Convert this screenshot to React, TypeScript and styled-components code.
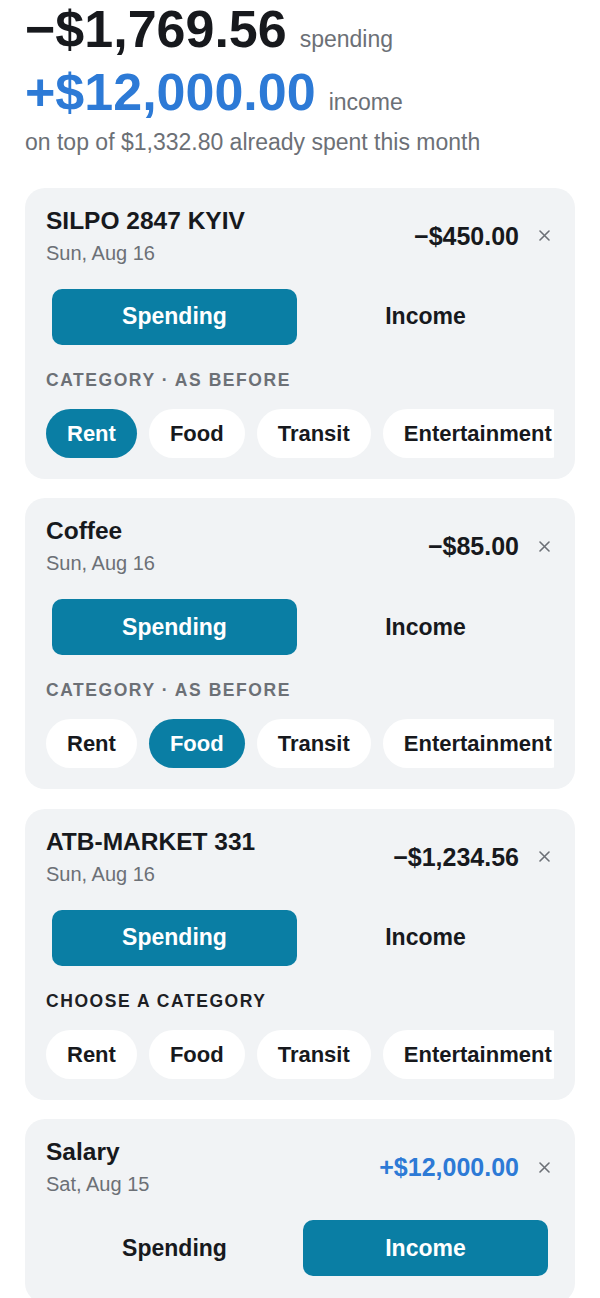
import React from "react";
import styled, { createGlobalStyle } from "styled-components";

const GlobalStyle = createGlobalStyle`
  html, body {
    margin: 0;
    padding: 0;
    background: #ffffff;
  }
  body {
    font-family: "Liberation Sans", Arial, sans-serif;
    color: #17191d;
    -webkit-font-smoothing: antialiased;
  }
  * { box-sizing: border-box; }
`;

const Page = styled.div`
  padding: 0 25px 40px;
  display: flex;
  flex-direction: column;
`;

const Summary = styled.header`
  margin-top: -2px;
  display: flex;
  flex-direction: column;
`;

const TotalLine = styled.div`
  display: flex;
  align-items: baseline;
  gap: 13px;
  height: 63px;
`;

const TotalValue = styled.span<{ $tone: "spend" | "income" }>`
  font-size: 52px;
  font-weight: 700;
  line-height: 63px;
  color: ${(p) => (p.$tone === "income" ? "#2d7ad6" : "#17191d")};
`;

const TotalLabel = styled.span`
  font-size: 23px;
  line-height: 1;
  color: #6c7076;
`;

const SummaryNote = styled.p`
  margin: 5px 0 0;
  font-size: 23px;
  line-height: 27.6px;
  color: #6c7076;
`;

const List = styled.div`
  margin-top: 31px;
  display: flex;
  flex-direction: column;
  gap: 19.5px;
`;

const Card = styled.section`
  background: #f1f3f5;
  border-radius: 20px;
  padding: 18px 21px 21px;
  display: flex;
  flex-direction: column;
`;

const CardHead = styled.div`
  display: flex;
  align-items: center;
  justify-content: space-between;
`;

const Who = styled.div`
  display: flex;
  flex-direction: column;
  gap: 4px;
`;

const Title = styled.div`
  font-size: 24.5px;
  font-weight: 700;
  line-height: 30px;
  color: #17191d;
`;

const DateText = styled.div`
  font-size: 20px;
  line-height: 26px;
  color: #6c7076;
`;

const AmountWrap = styled.div`
  display: flex;
  align-items: center;
  gap: 15px;
`;

const Amount = styled.div<{ $income?: boolean }>`
  font-size: 25px;
  font-weight: 700;
  line-height: 30px;
  color: ${(p) => (p.$income ? "#2d7ad6" : "#17191d")};
`;

const CloseButton = styled.button`
  width: 20px;
  height: 20px;
  padding: 0;
  border: 0;
  background: transparent;
  display: flex;
  align-items: center;
  justify-content: center;
  color: #6c7076;
  cursor: pointer;
`;

const Segment = styled.div`
  margin-top: 17px;
  padding: 6px;
  display: grid;
  grid-template-columns: 1fr 1fr;
  gap: 6px;
`;

const SegButton = styled.button<{ $active?: boolean }>`
  height: 56px;
  border: 0;
  border-radius: 10px;
  font-family: "Liberation Sans", Arial, sans-serif;
  font-size: 23px;
  font-weight: 700;
  background: ${(p) => (p.$active ? "#0a7ea4" : "transparent")};
  color: ${(p) => (p.$active ? "#ffffff" : "#17191d")};
  cursor: pointer;
`;

const CategoryLabel = styled.div<{ $strong?: boolean }>`
  margin-top: 19px;
  font-size: 17.5px;
  line-height: 21px;
  font-weight: 700;
  letter-spacing: 1.55px;
  text-transform: uppercase;
  color: ${(p) => (p.$strong ? "#1d2024" : "#6c7076")};
`;

const ChipRow = styled.div`
  margin-top: 18px;
  display: flex;
  gap: 12px;
  overflow: hidden;
`;

const Chip = styled.button<{ $active?: boolean }>`
  flex-shrink: 0;
  height: 49px;
  padding: 1px 21px 0;
  border: 0;
  border-radius: 999px;
  font-family: "Liberation Sans", Arial, sans-serif;
  font-size: 22px;
  font-weight: 700;
  background: ${(p) => (p.$active ? "#0a7ea4" : "#ffffff")};
  color: ${(p) => (p.$active ? "#ffffff" : "#17191d")};
  cursor: pointer;
`;

const CloseIcon = () => (
  <svg width="11" height="11" viewBox="0 0 11 11" fill="none">
    <path d="M1 1L10 10M10 1L1 10" stroke="currentColor" strokeWidth="1.6" strokeLinecap="round" />
  </svg>
);

type Tx = {
  title: string;
  date: string;
  amount: string;
  income?: boolean;
  label?: string;
  labelStrong?: boolean;
  category?: string | null;
  showCategories: boolean;
};

const categories = ["Rent", "Food", "Transit", "Entertainment"];

const txs: Tx[] = [
  { title: "SILPO 2847 KYIV", date: "Sun, Aug 16", amount: "\u2212$450.00", label: "Category · as before", category: "Rent", showCategories: true },
  { title: "Coffee", date: "Sun, Aug 16", amount: "\u2212$85.00", label: "Category · as before", category: "Food", showCategories: true },
  { title: "ATB-MARKET 331", date: "Sun, Aug 16", amount: "\u2212$1,234.56", label: "Choose a category", labelStrong: true, category: null, showCategories: true },
  { title: "Salary", date: "Sat, Aug 15", amount: "+$12,000.00", income: true, showCategories: false },
];

const TxCard = ({ tx }: { tx: Tx }) => (
  <Card>
    <CardHead>
      <Who>
        <Title>{tx.title}</Title>
        <DateText>{tx.date}</DateText>
      </Who>
      <AmountWrap>
        <Amount $income={tx.income}>{tx.amount}</Amount>
        <CloseButton aria-label="Remove">
          <CloseIcon />
        </CloseButton>
      </AmountWrap>
    </CardHead>
    <Segment>
      <SegButton $active={!tx.income}>Spending</SegButton>
      <SegButton $active={tx.income}>Income</SegButton>
    </Segment>
    {tx.showCategories && (
      <>
        <CategoryLabel $strong={tx.labelStrong}>{tx.label}</CategoryLabel>
        <ChipRow>
          {categories.map((c) => (
            <Chip key={c} $active={tx.category === c}>
              {c}
            </Chip>
          ))}
        </ChipRow>
      </>
    )}
  </Card>
);

export default function App() {
  return (
    <>
      <GlobalStyle />
      <Page>
        <Summary>
          <TotalLine>
            <TotalValue $tone="spend">−$1,769.56</TotalValue>
            <TotalLabel>spending</TotalLabel>
          </TotalLine>
          <TotalLine>
            <TotalValue $tone="income">+$12,000.00</TotalValue>
            <TotalLabel>income</TotalLabel>
          </TotalLine>
          <SummaryNote>on top of $1,332.80 already spent this month</SummaryNote>
        </Summary>
        <List>
          {txs.map((tx) => (
            <TxCard key={tx.title} tx={tx} />
          ))}
        </List>
      </Page>
    </>
  );
}
